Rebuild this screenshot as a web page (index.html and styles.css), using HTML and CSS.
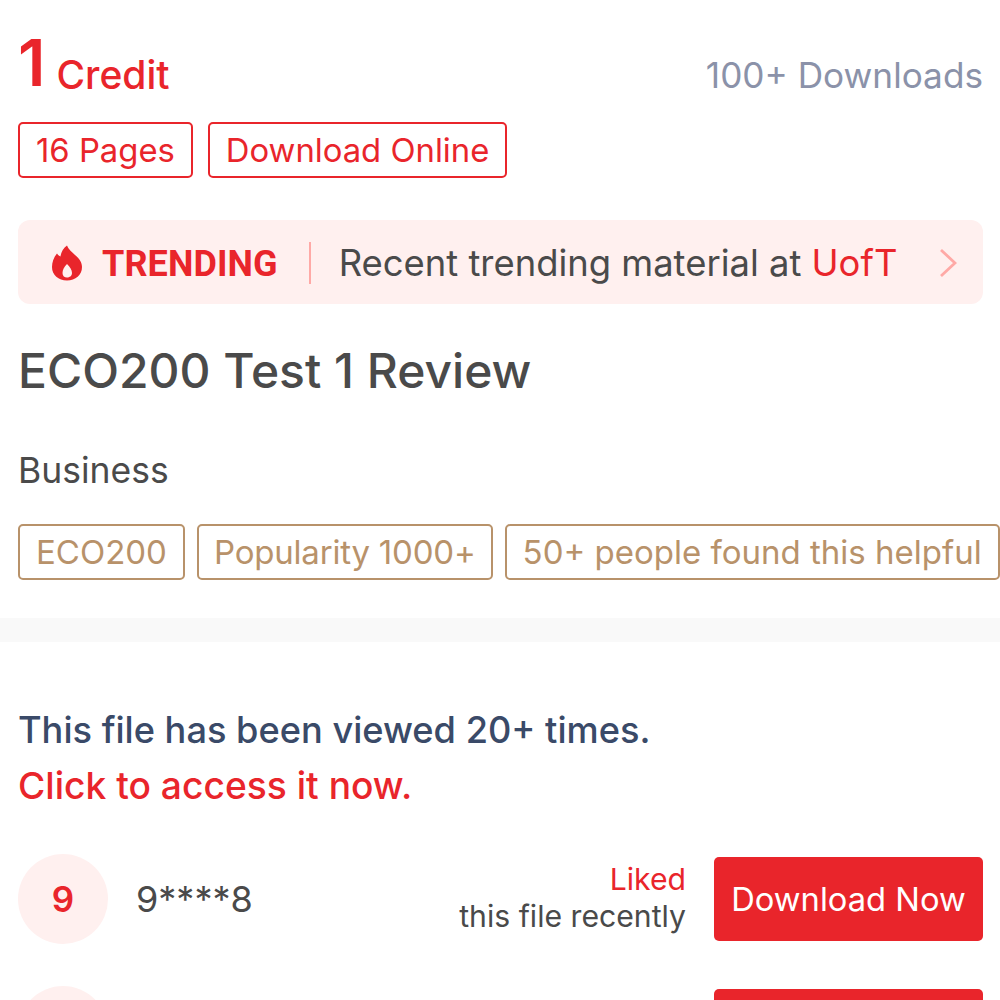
FILE: index.html
```html
<!DOCTYPE html>
<html lang="en">
<head>
<meta charset="utf-8">
<title>ECO200 Test 1 Review</title>
<link rel="stylesheet" href="styles.css">
</head>
<body>
<main class="page">
  <section class="info">
    <div class="price-row">
      <div class="price"><span class="price-num">1</span><span class="price-unit">Credit</span></div>
      <div class="downloads">100+ Downloads</div>
    </div>
    <div class="tags red-tags">
      <span class="tag tag-red">16 Pages</span>
      <span class="tag tag-red">Download Online</span>
    </div>
    <div class="banner">
      <svg class="flame" viewBox="0 0 32 36" width="32" height="36"><path fill="#e9252b" fill-rule="evenodd" d="M16 .5C17 4 21 7 24 10c5 4 7 8 7 12 0 8-6.500 13.500-15 13.500S1 30 1 22C1 17 3 12 6 8.500 7 10 8 11 9.500 11.500 10 7 12.500 3 16 .5zM16 19c-3 3-4.500 6-4.500 9 0 3 2 4.500 4.500 4.500s5-1.500 5-4.500c0-3-2-6-5-9z"/></svg>
      <span class="trend-label">TRENDING</span>
      <span class="banner-sep"></span>
      <span class="trend-text">Recent trending material at <em class="red">UofT</em></span>
      <svg class="chev" viewBox="0 0 18 30" width="18" height="30"><path d="M2 2l14 13L2 28" fill="none" stroke="#ffa9a6" stroke-width="2.8"/></svg>
    </div>
    <h1 class="title">ECO200 Test 1 Review</h1>
    <div class="category">Business</div>
    <div class="tags brown-tags">
      <span class="tag tag-brown">ECO200</span>
      <span class="tag tag-brown tag-tight">Popularity 1000+</span>
      <span class="tag tag-brown">50+ people found this helpful</span>
    </div>
  </section>
  <div class="divider"></div>
  <section class="activity">
    <p class="lead">This file has been viewed 20+ times.</p>
    <p class="lead lead-red">Click to access it now.</p>
    <div class="user-row">
      <span class="avatar">9</span>
      <span class="uname">9****8</span>
      <span class="action"><span class="red">Liked</span><br>this file recently</span>
      <span class="btn">Download Now</span>
    </div>
    <div class="user-row">
      <span class="avatar"></span>
      <span class="uname"></span>
      <span class="action"><span class="red">Downloaded</span><br>this file recently</span>
      <span class="btn">Download Now</span>
    </div>
  </section>
</main>
</body>
</html>
```
FILE: styles.css
```css
html, body { margin: 0; padding: 0; background: #fff; height: 1000px; overflow: hidden; }
body { font-family: "Inter", "Liberation Sans", sans-serif; color: #4a4a4a; }
.page { width: 1000px; }
.info { padding: 30px 0 38px 18px; white-space: nowrap; }
.red { color: #e9252b; font-style: normal; }
.price-row { display: flex; justify-content: space-between; align-items: center; height: 70px; margin-right: 17px; }
.price { color: #e9252b; line-height: 70px; padding-top: 16px; }
.price-num { font-size: 65px; font-weight: 600; margin-right: 11px; vertical-align: 3px; }
.price-unit { font-size: 39px; font-weight: 500; }
.downloads { font-size: 35.2px; color: #8b92a9; padding-top: 20px; }
.tags { display: flex; gap: 15px; }
.red-tags { margin-top: 22px; }
.tag { box-sizing: border-box; height: 56px; display: flex; align-items: center; padding: 0 16px; border-radius: 5px; font-size: 32.8px; }
.tag-red { border: 2px solid #e9252b; color: #e9252b; }
.tag-brown { border: 2px solid #b8926a; color: #b8926a; font-size: 33px; }
.tag-tight { letter-spacing: -0.2px; padding: 0 15px; }
.banner { box-sizing: border-box; margin: 42px 17px 0 0; height: 84px; background: #fff0ef; border-radius: 12px; display: flex; align-items: center; padding: 2px 26px 0 33px; }
.flame { flex: none; }
.trend-label { font-family: "Roboto", sans-serif; font-weight: 700; font-size: 36px; color: #e9252b; margin: 2px 0 0 19px; letter-spacing: 0.1px; }
.banner-sep { width: 2px; height: 42px; background: #ffa9a6; margin: 0 28px 0 31px; }
.trend-text { font-size: 36.4px; flex: 1; }
.chev { flex: none; }
.title { margin: 39px 0 0; font-size: 48px; line-height: 56px; font-weight: 500; color: #4a4a4a; }
.category { margin-top: 50px; font-size: 35.5px; line-height: 44px; }
.brown-tags { margin-top: 31px; gap: 12px; }
.divider { height: 24px; background: #f9f9f9; }
.activity { padding: 68px 17px 0 18px; }
.lead { margin: 0 0 16px; font-size: 36.2px; line-height: 40px; font-weight: 500; color: #3a4a68; }
.lead-red { font-size: 37.2px; color: #e9252b; }
.user-row { display: flex; align-items: center; height: 90px; margin-top: 42px; }
.lead + .user-row { margin-top: 48px; }
.avatar { width: 90px; height: 90px; border-radius: 50%; background: #fff0ef; color: #e9252b; display: flex; align-items: center; justify-content: center; font-size: 35px; font-weight: 600; flex: none; }
.uname { margin-left: 28px; font-size: 36px; flex: 1; }
.action { text-align: right; font-size: 30.2px; line-height: 37px; margin-right: 28px; padding-bottom: 2px; }
.btn { width: 269px; height: 84px; background: #e9252b; color: #fff; border-radius: 5px; display: flex; align-items: center; justify-content: center; font-size: 32.7px; flex: none; }
```
